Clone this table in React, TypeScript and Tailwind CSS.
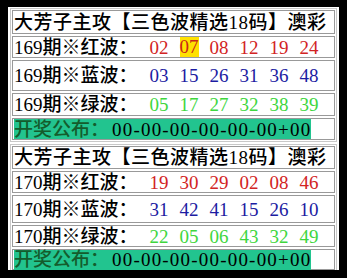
import React from "react";

type Ball = { n: string; hot?: boolean };

type Period = {
  issue: string;
  red: Ball[];
  blue: Ball[];
  green: Ball[];
  heights: string[];
};

const periods: Period[] = [
  {
    issue: "169",
    red: [{ n: "02" }, { n: "07", hot: true }, { n: "08" }, { n: "12" }, { n: "19" }, { n: "24" }],
    blue: [{ n: "03" }, { n: "15" }, { n: "26" }, { n: "31" }, { n: "36" }, { n: "48" }],
    green: [{ n: "05" }, { n: "17" }, { n: "27" }, { n: "32" }, { n: "38" }, { n: "39" }],
    heights: ["h-[24px]", "h-[22px]", "h-[31px]", "h-[23px]", "h-[22px]"],
  },
  {
    issue: "170",
    red: [{ n: "19" }, { n: "30" }, { n: "29" }, { n: "02" }, { n: "08" }, { n: "46" }],
    blue: [{ n: "31" }, { n: "42" }, { n: "41" }, { n: "15" }, { n: "26" }, { n: "10" }],
    green: [{ n: "22" }, { n: "05" }, { n: "06" }, { n: "43" }, { n: "32" }, { n: "49" }],
    heights: ["h-[23px]", "h-[22px]", "h-[28px]", "h-[22px]", "h-[21px]"],
  },
];

const font = { fontFamily: '"Liberation Serif", "Noto Sans CJK SC", serif' };

function WaveRow({
  label,
  balls,
  color,
  height,
}: {
  label: string;
  balls: Ball[];
  color: string;
  height: string;
}) {
  return (
    <div className={`flex items-center border border-[#999] ${height}`}>
      <span className="w-[131px] pl-[1px] text-black whitespace-nowrap">{label}</span>
      {balls.map((b, i) => (
        <span key={i} className={`w-[30px] text-center ${color}`}>
          {b.hot ? (
            <span className="inline-block h-[20px] leading-[20px] bg-[#ffe100] text-[#c8261a]">
              {b.n}
            </span>
          ) : (
            b.n
          )}
        </span>
      ))}
    </div>
  );
}

function PeriodTable({ p }: { p: Period }) {
  const [title, red, blue, green, draw] = p.heights;
  return (
    <div className="flex flex-col gap-[2px] border border-[#c8c8c8] p-[1px]">
      <div className={`flex items-center border border-[#999] pl-[1px] text-black whitespace-nowrap tracking-[0.5px] ${title}`}>
        大芳子主攻【三色波精选18码】澳彩
      </div>
      <WaveRow label={`${p.issue}期※红波：`} balls={p.red} color="text-[#d22424]" height={red} />
      <WaveRow label={`${p.issue}期※蓝波：`} balls={p.blue} color="text-[#1c1ca2]" height={blue} />
      <WaveRow label={`${p.issue}期※绿波：`} balls={p.green} color="text-[#3ed63e]" height={green} />
      <div className={`flex items-center border border-[#999] pl-[1px] ${draw}`}>
        <span className="inline-flex items-center h-[20px] bg-[#22c48f] whitespace-nowrap">
          <span className="text-[#145c2c]">开奖公布：</span>
          <span className="text-black tracking-[1.2px] ml-[3px]">00-00-00-00-00-00+00</span>
        </span>
      </div>
    </div>
  );
}

export default function App() {
  return (
    <div className="w-[347px] h-[278px] bg-black pt-[7px] pl-[8px] overflow-hidden" style={font}>
      <div className="w-[331px] h-[263px] bg-white px-[2px] pt-[1px] flex flex-col gap-[2px] overflow-hidden text-[19px] leading-none font-medium">
        {periods.map((p) => (
          <PeriodTable key={p.issue} p={p} />
        ))}
      </div>
    </div>
  );
}
